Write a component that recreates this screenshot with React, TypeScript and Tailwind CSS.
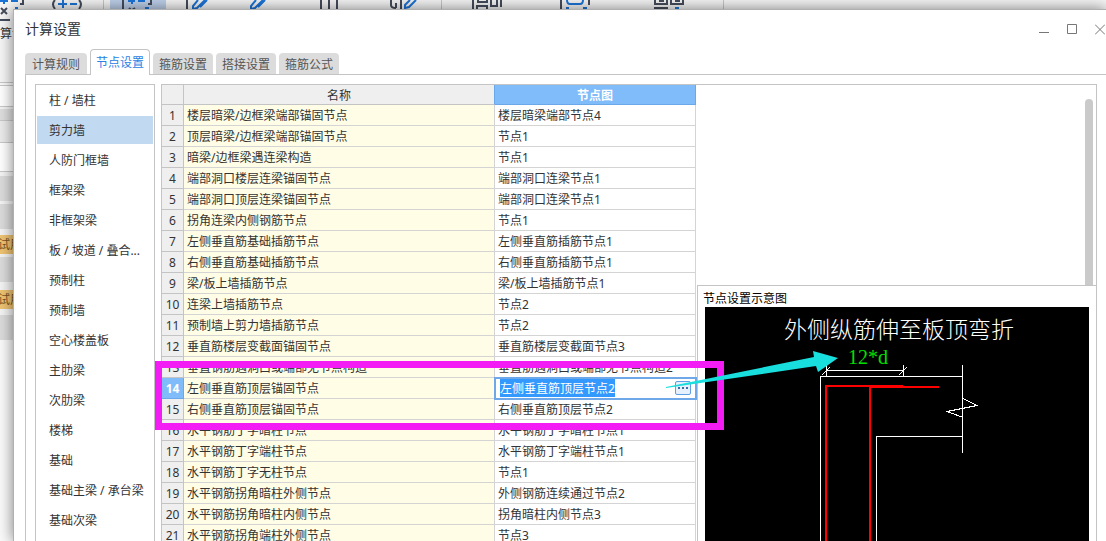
import { useState } from 'react';
import { clsx } from 'clsx';

const TABS = ['计算规则', '节点设置', '箍筋设置', '搭接设置', '箍筋公式'];

const CATEGORIES = [
  '柱 / 墙柱',
  '剪力墙',
  '人防门框墙',
  '框架梁',
  '非框架梁',
  '板 / 坡道 / 叠合...',
  '预制柱',
  '预制墙',
  '空心楼盖板',
  '主肋梁',
  '次肋梁',
  '楼梯',
  '基础',
  '基础主梁 / 承台梁',
  '基础次梁',
];

const ROWS: [string, string][] = [
  ['楼层暗梁/边框梁端部锚固节点', '楼层暗梁端部节点4'],
  ['顶层暗梁/边框梁端部锚固节点', '节点1'],
  ['暗梁/边框梁遇连梁构造', '节点1'],
  ['端部洞口楼层连梁锚固节点', '端部洞口连梁节点1'],
  ['端部洞口顶层连梁锚固节点', '端部洞口连梁节点1'],
  ['拐角连梁内侧钢筋节点', '节点1'],
  ['左侧垂直筋基础插筋节点', '左侧垂直筋插筋节点1'],
  ['右侧垂直筋基础插筋节点', '右侧垂直筋插筋节点1'],
  ['梁/板上墙插筋节点', '梁/板上墙插筋节点1'],
  ['连梁上墙插筋节点', '节点2'],
  ['预制墙上剪力墙插筋节点', '节点2'],
  ['垂直筋楼层变截面锚固节点', '垂直筋楼层变截面节点3'],
  ['垂直钢筋遇洞口或端部无节点构造', '垂直筋遇洞口或端部无节点构造2'],
  ['左侧垂直筋顶层锚固节点', '左侧垂直筋顶层节点2'],
  ['右侧垂直筋顶层锚固节点', '右侧垂直筋顶层节点2'],
  ['水平钢筋丁字暗柱节点', '水平钢筋丁字暗柱节点1'],
  ['水平钢筋丁字端柱节点', '水平钢筋丁字端柱节点1'],
  ['水平钢筋丁字无柱节点', '节点1'],
  ['水平钢筋拐角暗柱外侧节点', '外侧钢筋连续通过节点2'],
  ['水平钢筋拐角暗柱内侧节点', '拐角暗柱内侧节点3'],
  ['水平钢筋拐角端柱外侧节点', '节点3'],
];

const ACTIVE_ROW = 13;

const DARK = '#454c5c';
const BLUE = '#1b74d8';

function Toolbar() {
  return (
    <div className="flex h-[83px] items-start border-b border-[#c8c8c8] bg-[#f6f6f6]">
      <button aria-label="计算设置" className="w-[41px] shrink-0 text-left">
        <svg viewBox="0 0 41 24" className="h-6 w-[41px]" fill="none" strokeWidth="2">
          <path d="M0 1H8M4 0V4M11 1H18M15 8H18" stroke={BLUE} />
          <path d="M23 0V4H20M1 8L7 14M7 8L1 14M0 20H10" stroke={DARK} />
        </svg>
        <span className="block h-5 text-xs leading-5 text-[#333]">算设</span>
      </button>
      <button aria-label="比重设置" className="w-[62px] shrink-0">
        <svg viewBox="41 0 62 12" className="h-3 w-[62px]" fill="none" strokeWidth="2">
          <path d="M55 0Q51 4 55 9M79 0Q83 4 79 9" stroke={DARK} />
          <path d="M58 4H67M63 0V8M70 4H77" stroke={BLUE} />
        </svg>
      </button>
      <div className="mr-1.5 h-16 w-px shrink-0 bg-[#c8c8c8]" />
      <button aria-label="计算规则" className="flex h-16 w-14 shrink-0 items-start bg-[#bdd0ea]">
        <svg viewBox="110 0 56 12" className="h-3 w-14" fill="none" strokeWidth="2">
          <path d="M123 0V9M148 4H151V0M129 8L131 10M135 8L132 10" stroke={DARK} />
          <path d="M128 1H135M132 0V4M138 1H145M145 8H149" stroke={BLUE} />
        </svg>
      </button>
      <button aria-label="编辑钢筋" className="w-[62px] shrink-0">
        <svg viewBox="166 0 62 12" className="h-3 w-[62px]" fill="none" strokeWidth="2">
          <path d="M187 0V12" stroke={DARK} />
          <path d="M198 0L193 6V9L197 8L205 0M200 7L207 0" stroke={BLUE} />
        </svg>
      </button>
      <button aria-label="修改" className="w-[62px] shrink-0">
        <svg viewBox="228 0 62 12" className="h-3 w-[62px]" fill="none" strokeWidth="2">
          <path d="M256 0L251 6V9L255 8L263 0M258 7L265 0" stroke={BLUE} />
        </svg>
      </button>
      <button aria-label="钢筋三维" className="w-[75px] shrink-0">
        <svg viewBox="290 0 75 12" className="h-3 w-[75px]" fill="none" strokeWidth="2">
          <path d="M321 0V12M329 0V12M337 0V12" stroke={DARK} />
        </svg>
      </button>
      <button aria-label="查改标注" className="w-[76px] shrink-0">
        <svg viewBox="365 0 76 12" className="h-3 w-[76px]" fill="none" strokeWidth="2">
          <path d="M391 0V5Q391 8 396 8M396 3V8M401 0V9" stroke={DARK} />
          <path d="M410 0L405 5V8L409 7L416 0" stroke={BLUE} />
        </svg>
      </button>
      <div className="h-16 w-px shrink-0 bg-[#c8c8c8]" />
      <button aria-label="对齐" className="w-[88px] shrink-0">
        <svg viewBox="442 0 88 12" className="h-3 w-[88px]" fill="none" strokeWidth="2">
          <path d="M473 0V12M478 0V2H487V0M477 9V6H487V9M491 0V6H497V0M501 0V7" stroke={DARK} />
        </svg>
      </button>
      <button aria-label="范围" className="w-[90px] shrink-0">
        <svg viewBox="530 0 90 12" className="h-3 w-[90px]" fill="none" strokeWidth="2">
          <path d="M561 0V12M589 0V5" stroke={DARK} />
          <path d="M567 0Q567 4 570 4H580Q583 4 583 0M566 8H569M583 8H587" stroke={BLUE} />
        </svg>
      </button>
      <button aria-label="排序" className="w-[103px] shrink-0">
        <svg viewBox="620 0 103 12" className="h-3 w-[103px]" fill="none" strokeWidth="2">
          <path d="M655 0V4H667V0M659 1H664M661 0V2M671 0V4H683V0M675 1H680M654 8H668" stroke={DARK} />
          <path d="M675 8H679" stroke={BLUE} />
        </svg>
      </button>
      <div className="h-16 w-px shrink-0 bg-[#c8c8c8]" />
    </div>
  );
}

function PropertyStrip() {
  return (
    <div className="w-10 bg-[#f4f4f4] text-xs text-[#7a5320]">
      <div className="mt-0.5 h-[22px] border-y border-[#c8c8c8] bg-white" />
      <div className="mt-0.5 h-3 border-b border-[#c8c8c8] bg-[#dedede]" />
      <div className="h-[22px] border-b border-[#c8c8c8] bg-[#ebebeb]" />
      <div className="h-[29px] border-b border-[#c8c8c8] bg-white" />
      <div className="mt-1 h-[25px] bg-[#dcdcdc]" />
      <div className="mt-[3px] h-[25px] bg-[#dcdcdc]" />
      <div className="mt-1.5 h-[19px] bg-[#efc373] leading-5">
        <span className="-ml-0.5">试用</span>
      </div>
      <div className="mt-[3px] h-[25px] bg-[#dcdcdc]" />
      <div className="mt-2 h-[19px] bg-[#efc373] leading-5">
        <span className="-ml-0.5">试用</span>
      </div>
      <div className="mt-1.5 h-[25px] bg-[#dcdcdc]" />
    </div>
  );
}

function NodeDiagram() {
  return (
    <svg viewBox="0 0 384 234" className="mx-auto h-[234px] w-[384px]" fill="none">
      <text
        x="194"
        y="31"
        textAnchor="middle"
        fill="#fff"
        className="font-['Noto_Sans_CJK_SC',sans-serif] text-[23px] font-light"
      >
        外侧纵筋伸至板顶弯折
      </text>
      <text x="143" y="57" fill="#00e000" className="font-['Liberation_Serif',serif] text-[20px]">
        12*d
      </text>
      <g stroke="#fff" shapeRendering="crispEdges">
        <path d="M115.5 234V69.5H257.5" />
        <path d="M257.5 58V146" />
        <path d="M171.5 234V129.5H257.5" />
        <path d="M121.5 58V69M198.5 58V69M121.5 63.5H198.5" />
        <path d="M117 68L125 60M194 68L202 60" />
        <path d="M257 91L272 98.500L242 104.500L257 110" />
      </g>
      <g stroke="#f00" strokeWidth="2" shapeRendering="crispEdges">
        <path d="M121 234V79H198" />
        <path d="M165 234V80H234" />
      </g>
    </svg>
  );
}

function NodeTable() {
  const [value, setValue] = useState(ROWS[ACTIVE_ROW][1]);

  return (
    <table className="w-[534px] shrink-0 table-fixed border-separate border-spacing-0 self-start text-xs text-[#333]">
      <colgroup>
        <col className="w-[22px]" />
        <col className="w-[311px]" />
        <col className="w-[201px]" />
      </colgroup>
      <thead>
        <tr className="h-5">
          <th aria-label="序号" className="border-r border-b border-[#c4c4c4] bg-[#efefef] p-0" />
          <th className="border-r border-b border-r-[#6aa8ea] border-b-[#c4c4c4] bg-[#efefef] p-0 pt-0.5 leading-[17px] font-normal">
            名称
          </th>
          <th className="border-r border-b border-[#6aa8ea] bg-[#80bbfa] p-0 pt-0.5 leading-[17px] font-bold text-white">
            节点图
          </th>
        </tr>
      </thead>
      <tbody>
        {ROWS.map(([name, node], i) => (
          <tr key={name} className="h-[21px]">
            <th
              scope="row"
              className={clsx(
                'border-r border-b p-0 pt-0.5 text-center leading-[18px]',
                i === ACTIVE_ROW
                  ? 'border-[#6aa8ea] bg-[#80bbfa] font-bold text-white'
                  : 'border-[#c4c4c4] bg-[#efefef] font-normal'
              )}
            >
              {i + 1}
            </th>
            <td className="border-r border-b border-[#d4d4d4] bg-[#fffde6] p-0 pt-0.5 pl-[3px] leading-[18px] whitespace-nowrap">
              {name}
            </td>
            {i === ACTIVE_ROW ? (
              <td className="border-b border-transparent bg-white p-0 outline-2 -outline-offset-1 outline-[#6ea8e8]">
                <div className="flex h-5 items-center justify-between pr-[5px] pl-[5px]">
                  <input
                    aria-label={name}
                    value={value}
                    onChange={(e) => setValue(e.target.value)}
                    className="h-[18px] w-[115px] bg-[#3399ff] p-0 text-white outline-none"
                  />
                  <button
                    aria-label="选择节点"
                    className="flex h-3.5 w-4 items-center justify-center gap-0.5 rounded-xs border border-[#5c9fe4] bg-[#e6f1fd]"
                  >
                    <span className="size-0.5 bg-[#3c6ca8]" />
                    <span className="size-0.5 bg-[#3c6ca8]" />
                    <span className="size-0.5 bg-[#3c6ca8]" />
                  </button>
                </div>
              </td>
            ) : (
              <td className="border-r border-b border-[#d4d4d4] bg-white p-0 pt-0.5 pl-[3px] leading-[18px] whitespace-nowrap">
                {node}
              </td>
            )}
          </tr>
        ))}
      </tbody>
    </table>
  );
}

function WindowControls() {
  return (
    <div className="flex gap-[18px] text-[#777]">
      <button aria-label="最小化">
        <svg viewBox="0 0 10 11" className="h-[11px] w-2.5" stroke="currentColor">
          <path d="M0 8.500H10" />
        </svg>
      </button>
      <button aria-label="最大化">
        <svg viewBox="0 0 10 11" className="h-[11px] w-2.5" stroke="currentColor" fill="none">
          <path d="M0.500 0.500H9.500V9.500H0.500Z" />
        </svg>
      </button>
      <button aria-label="关闭">
        <svg viewBox="0 0 10 11" className="h-[11px] w-2.5" stroke="currentColor">
          <path d="M0 0.500L10 10.500M10 0.500L0 10.500" />
        </svg>
      </button>
    </div>
  );
}

export default function App() {
  const [tab, setTab] = useState(1);
  const [category, setCategory] = useState(1);

  return (
    <div className="relative h-screen overflow-hidden bg-[#fafafa] font-['Noto_Sans','Noto_Sans_CJK_SC',sans-serif]">
      <Toolbar />
      <PropertyStrip />

      {/* Settings dialog */}
      <div
        role="dialog"
        aria-labelledby="dialog-title"
        className="absolute top-[9px] right-0 bottom-0 left-[13px] flex flex-col border-t border-l border-[#b0b0b0] bg-white shadow-[0_0_14px_rgba(0,0,0,0.5)]"
      >
        <header className="flex h-[39px] shrink-0 items-center justify-between pr-px pl-[11px]">
          <h1 id="dialog-title" className="pb-0.5 text-sm text-[#333]">
            计算设置
          </h1>
          <WindowControls />
        </header>

        <div role="tablist" className="ml-[11px] flex h-[25px] shrink-0 items-end gap-[3px] text-xs">
          {TABS.map((label, i) => (
            <button
              key={label}
              role="tab"
              aria-selected={tab === i}
              onClick={() => setTab(i)}
              className={clsx(
                'rounded-t',
                tab === i
                  ? 'z-10 -mb-px h-[26px] border border-b-0 border-[#c4c4c4] bg-white px-[5px] text-[#2a82e4]'
                  : 'h-[21px] bg-[#dcdcdc] px-1.5 pt-0.5 text-[#555] first:px-[7px]'
              )}
            >
              {label}
            </button>
          ))}
        </div>

        <div className="ml-[11px] flex min-h-0 grow gap-1.5 border-t border-l border-[#c4c4c4] pt-[9px] pr-[9px] pl-[9px]">
          <nav className="flex w-[120px] shrink-0 flex-col gap-0.5 overflow-hidden border border-b-0 border-[#c4c4c4] p-px text-xs text-[#333]">
            {CATEGORIES.map((label, i) => (
              <button
                key={label}
                onClick={() => setCategory(i)}
                className={clsx(
                  'h-7 shrink-0 pt-0.5 pl-3 text-left whitespace-nowrap',
                  category === i && 'bg-[#c2d9f2]'
                )}
              >
                {label}
              </button>
            ))}
          </nav>

          <div className="relative flex min-w-0 grow border border-b-0 border-[#c4c4c4]">
            <NodeTable />

            <div className="ml-px flex min-w-0 grow flex-col">
              <div className="flex h-[200px] shrink-0 justify-end pt-3.5 pr-[3px]">
                <div className="w-2 rounded-t-full bg-[#cacaca]" />
              </div>
              <section className="flex grow flex-col border-t border-l border-[#c4c4c4] bg-white">
                <h2 className="h-[21px] pt-0.5 pl-[5px] text-xs leading-[22px] text-black">节点设置示意图</h2>
                <div className="mx-[7px] grow overflow-hidden bg-black">
                  <NodeDiagram />
                </div>
              </section>
            </div>

            {/* Callout frame and arrow */}
            <div className="pointer-events-none absolute top-[276px] -left-[7px] h-[69px] w-[569px] border-[7px] border-[#f41cf4]" />
            <svg
              viewBox="0 0 172 38"
              className="pointer-events-none absolute top-[265px] left-[504px] h-[38px] w-[172px]"
            >
              <path d="M0 37L148 7L147 1L172 8L152 22L150 16L0 38Z" fill="#19dede" />
            </svg>
          </div>
        </div>
      </div>
    </div>
  );
}
